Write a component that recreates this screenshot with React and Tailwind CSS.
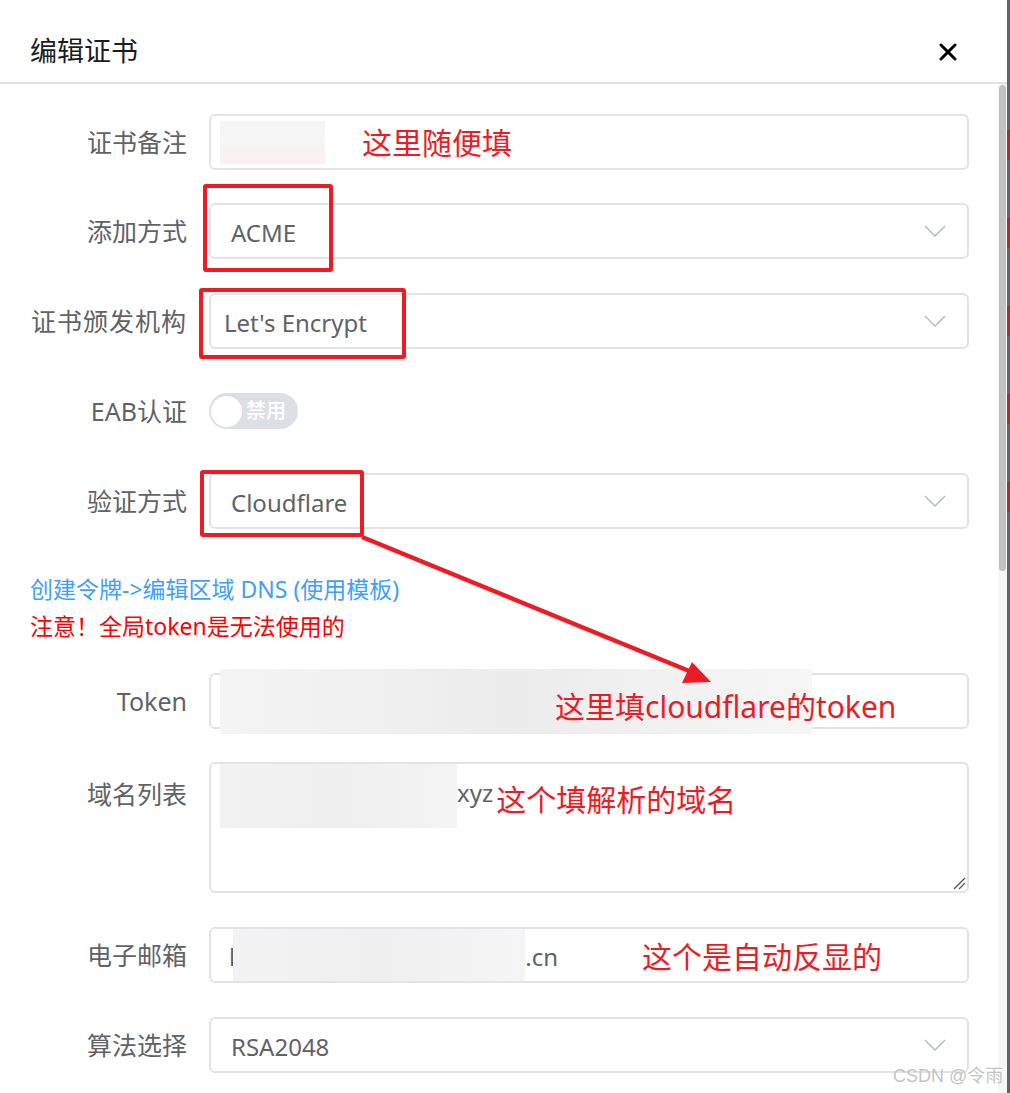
import React from "react";

const Chevron = () => (
  <svg width="22" height="12" viewBox="0 0 22 12" className="shrink-0">
    <polyline points="1,1 11,11 21,1" fill="none" stroke="#b9bdc5" strokeWidth="1.6" />
  </svg>
);

function Row({ label, children, className, labelClass }) {
  return (
    <div className={"flex " + (className || "")}>
      <div
        className={
          "w-[179px] shrink-0 pr-[22px] text-right text-[25px] text-[#606266] h-[56px] leading-[56px] whitespace-nowrap " +
          (labelClass || "")
        }
      >
        {label}
      </div>
      <div className="flex-1 min-w-0">{children}</div>
    </div>
  );
}

function Select({ value, pl }) {
  return (
    <div
      className={
        "h-[56px] border-2 border-[#e1e3e9] rounded-[6px] flex items-center justify-between pr-[21px] text-[24px] text-[#606266] bg-white " +
        (pl || "pl-[20px]")
      }
    >
      <span className="whitespace-nowrap pt-[3px]">{value}</span>
      <Chevron />
    </div>
  );
}

export default function App() {
  return (
    <div className="relative w-[1010px] h-[1093px] overflow-hidden flex bg-white font-['Noto_Sans','Noto_Sans_CJK_SC',sans-serif]">
      <div className="w-[1007px] flex flex-col">
        {/* header */}
        <div className="h-[84px] shrink-0 border-b-2 border-[#e2e2e2] flex items-center justify-between pl-[30px] pr-[50px] pt-[21px]">
          <span className="text-[27px] text-[#1c1c1c]">编辑证书</span>
          <svg width="18" height="18" viewBox="0 0 18 18">
            <line x1="2" y1="2" x2="16" y2="16" stroke="#000" strokeWidth="3" strokeLinecap="round" />
            <line x1="16" y1="2" x2="2" y2="16" stroke="#000" strokeWidth="3" strokeLinecap="round" />
          </svg>
        </div>
        {/* body */}
        <div className="flex-1 flex min-h-0">
          <div className="flex-1 min-w-0 pl-[30px] pr-[29px] pt-[30px]">
            <Row label="证书备注" className="mb-[33px]">
              <div className="h-[56px] border-2 border-[#e1e3e9] rounded-[6px] flex items-center pl-[9px]">
                <div className="w-[105px] h-[43px] bg-linear-to-b from-[#f5f5f5] via-[#f7f5f5] to-[#fcefef]" />
                <span className="ml-[37px] text-[30px] text-[#ed1c24] whitespace-nowrap">这里随便填</span>
              </div>
            </Row>
            <Row label="添加方式" className="mb-[34px]">
              <Select value="ACME" />
            </Row>
            <Row label="证书颁发机构" className="mb-[34px]" labelClass="tracking-[1px]">
              <Select value="Let's Encrypt" pl="pl-[13px]" />
            </Row>
            <Row label="EAB认证" className="mb-[34px]">
              <div className="h-[56px] flex items-center">
                <div className="w-[89px] h-[36px] rounded-full bg-[#dcdfe6] flex items-center">
                  <div className="w-[31px] h-[31px] rounded-full bg-white ml-[2px]" />
                  <span className="ml-[4px] text-[20px] font-medium text-white leading-none">禁用</span>
                </div>
              </div>
            </Row>
            <Row label="验证方式" className="mb-[42px]">
              <Select value="Cloudflare" />
            </Row>
            <div className="text-[23px] leading-[37px] mb-[28px]">
              <div className="text-[#409eff] whitespace-nowrap">创建令牌-&gt;编辑区域 DNS (使用模板)</div>
              <div className="text-[#ff0000] whitespace-nowrap">注意！全局token是无法使用的</div>
            </div>
            <Row label="Token" className="mb-[33px]">
              <div className="relative h-[56px] border-2 border-[#e1e3e9] rounded-[6px]">
                <div className="absolute left-[9px] top-[-6px] w-[592px] h-[65px] bg-linear-to-r from-[#f4f4f4] via-[#ececec] to-[#f6f6f6]" />
                <span className="absolute left-[344px] top-[12px] text-[30px] leading-[40px] text-[#ed1c24] whitespace-nowrap">
                  这里填cloudflare的token
                </span>
              </div>
            </Row>
            <Row label="域名列表" className="mb-[34px]" labelClass="pt-[4px]">
              <div className="relative h-[131px] border-2 border-[#e1e3e9] rounded-[6px] flex items-start pl-[9px]">
                <div className="w-[237px] h-[64px] bg-linear-to-r from-[#f2f2f2] via-[#efefef] to-[#f4f4f4]" />
                <span className="mt-[14px] text-[24px] leading-[30px] text-[#606266]">xyz</span>
                <span className="ml-[3px] mt-[18px] text-[30px] leading-[36px] text-[#ed1c24] whitespace-nowrap">
                  这个填解析的域名
                </span>
                <svg className="absolute right-[1px] bottom-[1px]" width="14" height="14" viewBox="0 0 14 14">
                  <line x1="2" y1="13" x2="13" y2="2" stroke="#555" strokeWidth="1.3" />
                  <line x1="7" y1="13" x2="13" y2="7" stroke="#555" strokeWidth="1.3" />
                </svg>
              </div>
            </Row>
            <Row label="电子邮箱" className="mb-[34px]">
              <div className="h-[56px] border-2 border-[#e1e3e9] rounded-[6px] flex items-center pl-[18px] text-[24px] text-[#606266]">
                <span className="pt-[3px]">l</span>
                <div className="ml-[-2px] w-[292px] h-[52px] bg-linear-to-r from-[#f3f3f3] via-[#efefef] to-[#f5f5f5]" />
                <span className="pt-[3px]">.cn</span>
                <span className="ml-[84px] pt-[3px] text-[30px] text-[#ed1c24] whitespace-nowrap">这个是自动反显的</span>
              </div>
            </Row>
            <Row label="算法选择">
              <Select value="RSA2048" />
            </Row>
          </div>
          {/* scrollbar */}
          <div className="w-[9px] shrink-0 bg-[#f6f6f6] pt-[1px]">
            <div className="h-[486px] mx-[1px] rounded-full bg-[#c1c1c1]" />
          </div>
        </div>
      </div>
      {/* background page edge */}
      <div className="w-[3px] shrink-0 bg-[#5b6570] flex flex-col">
        <div className="h-[130px]" />
        <div className="h-[30px] bg-[#8a3b3b]" />
        <div className="h-[58px]" />
        <div className="h-[30px] bg-[#8a3b3b]" />
        <div className="h-[58px]" />
        <div className="h-[30px] bg-[#8a3b3b]" />
        <div className="h-[58px]" />
        <div className="h-[30px] bg-[#8a3b3b]" />
        <div className="h-[58px]" />
        <div className="h-[30px] bg-[#8a3b3b]" />
      </div>

      {/* annotations overlay */}
      <svg className="absolute left-0 top-0 pointer-events-none" width="1010" height="1093" viewBox="0 0 1010 1093">
        <rect x="205" y="186" width="126" height="84" fill="none" stroke="#ed1c24" strokeWidth="4" rx="1" />
        <rect x="201" y="290" width="203" height="67" fill="none" stroke="#ed1c24" strokeWidth="4" rx="1" />
        <rect x="202" y="472" width="160" height="63" fill="none" stroke="#ed1c24" strokeWidth="4" rx="1" />
        <line x1="362" y1="537" x2="694" y2="673" stroke="#ed1c24" strokeWidth="4.5" />
        <polygon points="692,662 711,682 682,683" fill="#ed1c24" />
      </svg>
      <div className="absolute left-[893px] top-[1063px] text-[18px] text-[#c4c4c4] font-['Liberation_Sans','Noto_Sans_CJK_SC',sans-serif] whitespace-nowrap">
        CSDN @令雨
      </div>
    </div>
  );
}
